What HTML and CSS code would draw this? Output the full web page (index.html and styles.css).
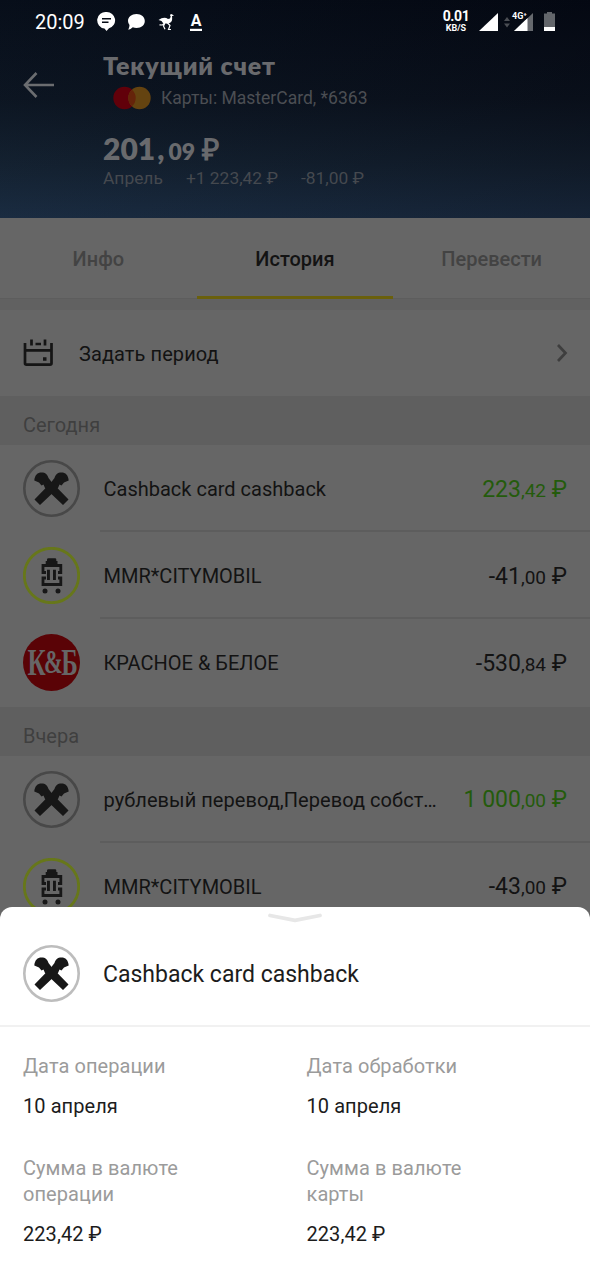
FILE: index.html
```html
<!DOCTYPE html>
<html lang="ru">
<head>
<meta charset="utf-8">
<title>Текущий счет</title>
<link rel="stylesheet" href="styles.css">
</head>
<body>
<svg class="defs" width="0" height="0">
  <symbol id="cross" viewBox="0 0 57 57">
    <circle cx="28.5" cy="28.5" r="27.2" fill="none" stroke="currentColor" stroke-width="2.600"/>
    <g fill="#171717">
      <path d="M11.300 20.500C11.800 15 14.500 12.500 18.500 12.500C22.500 12.500 24.500 14.500 25.500 18L29 22.500L45.500 39.500L40 45L22 28L20.500 24.500L18.500 25.500L16 22.500Z"/>
      <path d="M45.700 20.500C45.200 15 42.500 12.500 38.500 12.500C34.500 12.500 32.500 14.500 31.500 18L28 22.500L11.500 39.500L17 45L35 28L36.500 24.500L38.500 25.500L41 22.500Z"/>
    </g>
  </symbol>
  <symbol id="luggage" viewBox="0 0 57 57">
    <circle cx="28.500" cy="28.500" r="27.200" fill="none" stroke="#67771a" stroke-width="2.800"/>
    <path d="M22.700 18V14H24V12.500Q24 11.300 25.500 11.300H32Q33.300 11.300 33.300 12.500V14H34.500V18ZM24 22.700H26.900V33H24ZM30 22.700H32.900V33H30Z" fill="#171717"/>
    <path d="M23 25.500H20V18.500H37.800V25.500H35M35 31H37.800V37.500H20V31H23" fill="none" stroke="#171717" stroke-width="2.800"/>
    <circle cx="22" cy="44" r="2.500" fill="#171717"/><circle cx="35" cy="44" r="2.500" fill="#171717"/>
  </symbol>
</svg>
<div class="screen">
  <header class="header">
    <div class="status">
      <span class="clock">20:09</span>
      <svg class="s-notes" width="110" height="22" viewBox="0 0 110 22" fill="#fff">
        <path d="M9.500 1A8.300 8.300 0 0 1 12 17.300L9.500 20L7.500 17.500A8.300 8.300 0 0 1 9.500 1Z"/>
        <path d="M5 7.700H14M5 11.200H11.500" stroke="#050a14" stroke-width="1.400"/>
        <path d="M39.500 3C44.500 3 47.800 6 47.800 10S44.500 17 39.500 17Q37.500 17 35.800 16.300Q33.500 18.500 31.300 18.800Q32.500 16.500 32.500 14Q31 12.200 31 10C31 6 34.500 3 39.500 3Z"/>
        <path d="M61.500 9L64.500 7.200Q68.500 5.800 71 8Q73.500 8 73.700 5.500L73 4.200L73.800 3L75 3.200L77 4.700L75 5Q75.800 10 73.500 11.500Q71.500 13 69 12.500L66 12L64.500 10Z"/>
        <path d="M67.500 12L65.500 14L62.500 13.800M70.500 12L73 14.500L71.500 18.500H74M68 12L66.500 15L68 18.300" fill="none" stroke="#fff" stroke-width="1.200"/>
        <path d="M93 17.800H105V20H93Z"/>
        <text x="99" y="15" text-anchor="middle" class="notice-letter">A</text>
      </svg>
      <div class="speed"><b>0.01</b><small>KB/S</small></div>
      <svg class="s-signal" width="80" height="24" viewBox="0 0 80 24">
        <path d="M0 20L19 2V20Z" fill="#fff"/>
        <path d="M25 10L28 6L31 10ZM25 12.500L28 16.500L31 12.500Z" fill="#4b4e54"/>
        <path d="M35 20L54 2V20Z" fill="#66696e"/><path d="M35 20L48.500 7V20Z" fill="#fff"/>
        <path d="M33 0H49V6L46.500 8.500H33Z" fill="#050a14"/>
        <text x="33" y="8" class="network">4G⁺</text>
        <path d="M65 2.500H68V1H73V2.500H76V20H65Z" fill="#63666b"/><path d="M65 16H76V20H65Z" fill="#fff"/>
      </svg>
    </div>
    <div class="account">
      <svg class="back" width="34" height="28" viewBox="0 0 34 28" fill="none" stroke="#6b6d70" stroke-width="2.600"><path d="M14.500 2L3 14L14.500 26M3 14H32"/></svg>
      <div class="info">
        <h1>Текущий счет</h1>
        <div class="card"><svg width="38" height="24" viewBox="0 0 38 24"><circle cx="11.500" cy="12" r="11.200" fill="#61000a"/><circle cx="26.500" cy="12" r="11.200" fill="#644310"/><path d="M19 3.700A11.200 11.200 0 0 1 19 20.300A11.200 11.200 0 0 1 19 3.700Z" fill="#65240a"/></svg><span>Карты: MasterCard, *6363</span></div>
        <div class="balance">201<span class="comma">,</span><small>09</small> ₽</div>
        <div class="totals"><span>Апрель</span><span>+1 223,42 ₽</span><span>-81,00 ₽</span></div>
      </div>
    </div>
  </header>
  <nav class="tabs"><span>Инфо</span><span class="active">История</span><span>Перевести</span></nav>
  <div class="period">
    <svg width="30" height="28" viewBox="0 0 30 28" fill="none" stroke="#151515" stroke-width="2.700"><path d="M2 4V24.300Q2 25.700 3.500 25.700H27Q28.500 25.700 28.500 24.300V4M2 11.300H28.500M8.500 .5V6.500M22 .5V6.500M12.500 5H18"/><path d="M20 20H23.500" stroke-width="3.500"/></svg>
    <span>Задать период</span>
    <svg class="chevron" width="12" height="18" viewBox="0 0 12 18" fill="none" stroke="#3e3e3e" stroke-width="2.700"><path d="M2 1L9.500 9L2 17"/></svg>
  </div>
  <h2 class="day">Сегодня</h2>
  <div class="row"><svg class="logo"><use href="#cross"/></svg><div class="entry"><span class="name">Cashback card cashback</span><span class="sum plus">223<small>,42</small> ₽</span></div></div>
  <div class="row"><svg class="logo"><use href="#luggage"/></svg><div class="entry"><span class="name">MMR*CITYMOBIL</span><span class="sum">-41<small>,00</small> ₽</span></div></div>
  <div class="row"><svg class="logo" viewBox="0 0 57 57"><circle cx="28.500" cy="28.500" r="28.500" fill="#5a0306"/><g transform="translate(4.500 41) scale(.66 1)" class="brand"><text x="0" y="0">К</text><text x="25" y="-2" class="amp">&amp;</text><text x="51" y="0">Б</text></g></svg><div class="entry last"><span class="name">КРАСНОЕ &amp; БЕЛОЕ</span><span class="sum">-530<small>,84</small> ₽</span></div></div>
  <h2 class="day">Вчера</h2>
  <div class="row"><svg class="logo"><use href="#cross"/></svg><div class="entry"><span class="name wide">рублевый перевод,Перевод собст…</span><span class="sum plus">1 000<small>,00</small> ₽</span></div></div>
  <div class="row"><svg class="logo"><use href="#luggage"/></svg><div class="entry"><span class="name">MMR*CITYMOBIL</span><span class="sum">-43<small>,00</small> ₽</span></div></div>
  <section class="sheet">
    <svg class="handle" width="54" height="10" viewBox="0 0 54 10" fill="none" stroke="#e7e7e7" stroke-width="3.800" stroke-linecap="round" stroke-linejoin="round"><path d="M2 2.500L27 7.300L52 2.500"/></svg>
    <div class="sheet-head"><svg class="logo light"><use href="#cross"/></svg><span>Cashback card cashback</span></div>
    <dl class="details">
      <div><dt>Дата операции</dt><dd>10 апреля</dd></div>
      <div><dt>Дата обработки</dt><dd>10 апреля</dd></div>
      <div><dt>Сумма в валюте<br>операции</dt><dd>223,42 ₽</dd></div>
      <div><dt>Сумма в валюте<br>карты</dt><dd>223,42 ₽</dd></div>
    </dl>
  </section>
</div>
</body>
</html>
```
FILE: styles.css
```css
* { box-sizing: border-box; }
body { margin: 0; font-family: Roboto, "Noto Sans", sans-serif; font-size: 20px; color: #131313; }
.defs { position: absolute; }
.screen { position: relative; width: 590px; height: 1280px; overflow: hidden; background: #666; }
.header { height: 218px; background: linear-gradient(90deg, rgba(25,50,75,.1), rgba(0,0,10,.18)), linear-gradient(#050a14, #0b121d 45%, #131f2d 75%, #1a2b40); }
.status { height: 44px; display: flex; align-items: flex-start; padding: 0 30px 0 35px; color: #fff; }
.clock { font-size: 20px; line-height: 24px; padding-top: 10px; width: 62px; flex: none; }
.s-notes { margin-top: 11px; flex: none; }
.notice-letter { font: 700 16px Roboto, sans-serif; }
.speed { width: 32px; margin-left: 233px; padding-top: 9px; display: flex; flex-direction: column; align-items: center; flex: none; }
.speed b { font-size: 14px; line-height: 15px; font-weight: 700; letter-spacing: -.4px; }
.speed small { font-size: 9px; line-height: 8px; font-weight: 700; }
.s-signal { margin: 11px 0 0 7px; flex: none; }
.network { font: 700 9px Roboto, sans-serif; fill: #fff; }
.account { display: flex; }
.back { margin: 27px 0 0 22px; width: 34px; flex: none; }
.info { margin-left: 47px; color: #696a6d; }
h1 { margin: 4px 0 0; font: 800 25px/34px Lato, "Open Sans", sans-serif; letter-spacing: .8px; white-space: nowrap; }
.card { height: 24px; margin-top: 4px; padding-left: 10px; display: flex; align-items: center; gap: 10px; font-size: 17.500px; color: #4b4e53; }
.balance { font: 800 30px/36px Lato, "Open Sans", sans-serif; margin-top: 20px; white-space: nowrap; }
.comma { margin: 0 4px 0 2px; }
.balance small { font-size: 23px; }
.totals { font-size: 17.400px; line-height: 22px; margin-top: -2px; display: flex; gap: 23px; white-space: nowrap; color: #45494f; }
.tabs { height: 81px; display: grid; grid-template-columns: repeat(3, 1fr); text-align: center; line-height: 83px; font-size: 20px; font-weight: 500; color: #434343; border-bottom: 1px solid #5d5d5d; }
.tabs .active { color: #131313; height: 81px; border-bottom: 3px solid #6a600c; }
.period { height: 97px; border-top: 11px solid #616161; display: flex; align-items: center; padding: 0 22px 0 23px; }
.period span { margin: 2px auto 0 26px; letter-spacing: .08px; }
.day { height: 49px; margin: 0; padding: 6px 23px 0; line-height: 46px; font-size: 20px; font-weight: 400; background: #5f5f5f; color: #3f3f3f; }
.row { height: 87.200px; display: flex; padding-left: 23px; }
.logo { width: 57px; height: 57px; flex: none; margin-top: 15px; color: #484848; }
.brand { font: 700 38px "Liberation Serif", serif; fill: #666; }
.amp { font-size: 34px; }
.entry { flex: 1; margin-left: 20px; padding: 3px 23px 0 3.500px; display: flex; align-items: center; justify-content: space-between; border-bottom: 2px solid #5d5d5d; white-space: nowrap; }
.entry.last { border-color: transparent; }
.wide { letter-spacing: .05px; }
.sum { font-size: 23px; }
.sum small { font-size: 19px; }
.sum.plus { color: #245b0c; }
.sheet { position: absolute; left: 0; right: 0; top: 907px; bottom: 0; background: #fff; border-radius: 12px 12px 0 0; color: #1c1c1c; }
.handle { display: block; margin: 6px auto 0; }
.sheet-head { height: 104px; display: flex; padding: 7px 23px 0; border-bottom: 2px solid #f1f1f1; font-size: 23px; line-height: 89px; }
.sheet-head span { margin-left: 23px; }
.light { color: #bdbdbd; }
.details { margin: 0; padding: 25.500px 23px 0; display: grid; grid-template-columns: 283.500px 1fr; row-gap: 36px; line-height: 26px; letter-spacing: .07px; }
dt { color: #9b9b9b; }
dd { margin: 14px 0 0; }
```
